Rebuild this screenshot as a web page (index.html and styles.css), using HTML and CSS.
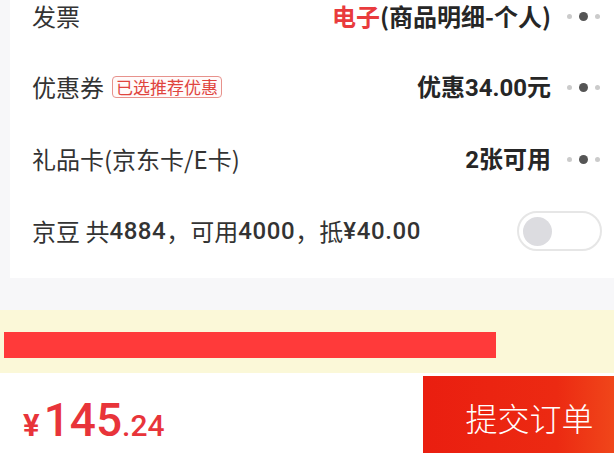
FILE: index.html
```html
<!DOCTYPE html>
<html lang="zh-CN">
<head>
<meta charset="utf-8">
<title>订单结算</title>
<link rel="stylesheet" href="styles.css">
</head>
<body>
<div class="page">
  <div class="card">
    <div class="row row-first">
      <div class="label">发票</div>
      <div class="value"><span class="red">电子</span>(商品明细-个人)</div>
      <span class="more"><i class="d s"></i><i class="d b"></i><i class="d s"></i></span>
    </div>
    <div class="row">
      <div class="label">优惠券 <span class="badge">已选推荐优惠</span></div>
      <div class="value">优惠<span class="num">34.00</span>元</div>
      <span class="more"><i class="d s"></i><i class="d b"></i><i class="d s"></i></span>
    </div>
    <div class="row">
      <div class="label">礼品卡(京东卡/E卡)</div>
      <div class="value"><span class="num">2</span>张可用</div>
      <span class="more"><i class="d s"></i><i class="d b"></i><i class="d s"></i></span>
    </div>
    <div class="row">
      <div class="label">京豆&nbsp;共<span class="num">4884</span>，可用<span class="num">4000</span>，抵<span class="num">¥40.00</span></div>
      <span class="toggle"><span class="knob"></span></span>
    </div>
  </div>
  <div class="notice">
    <div class="notice-bar"></div>
  </div>
  <div class="footer">
    <div class="price"><span class="cur">¥</span><span class="int">145</span><span class="dec">.24</span></div>
    <button class="submit">提交订单</button>
  </div>
</div>
</body>
</html>
```
FILE: styles.css
```css
* { box-sizing: border-box; }
html, body {
  margin: 0;
  padding: 0;
}
body {
  width: 614px;
  height: 453px;
  overflow: hidden;
  background: #f7f7f9;
  font-family: "Noto Sans CJK SC", "Noto Sans", sans-serif;
  color: #333;
}
.page {
  display: flex;
  flex-direction: column;
  height: 453px;
}
.card {
  margin-left: 10px;
  background: #fff;
  padding: 0 12px 11px 22px;
}
.row {
  display: flex;
  align-items: center;
  height: 72px;
}
.row-first {
  height: 51px;
  align-items: flex-start;
  padding-top: 2px;
}
.row-first .more { margin-top: 10px; }
.label {
  flex: 1;
  font-size: 24px;
  line-height: 28px;
  color: #333;
  display: flex;
  align-items: center;
  white-space: nowrap;
}
.num {
  font-family: Roboto, "Noto Sans", sans-serif;
  font-weight: 500;
}
.label .num { letter-spacing: 0.6px; }
.badge {
  margin-left: 8px;
  font-size: 17px;
  line-height: 20px;
  padding: 0 3px;
  color: #e0443e;
  border: 1px solid #e7928c;
  border-radius: 4px;
  background: #fffafa;
}
.value {
  font-size: 24px;
  line-height: 28px;
  font-weight: 700;
  color: #262626;
  white-space: nowrap;
}
.value .num { font-weight: 700; }
.red { color: #e93b3d; }
.more {
  display: flex;
  align-items: center;
  justify-content: space-between;
  width: 33px;
  margin-left: 16px;
  margin-right: 2px;
}
.d {
  display: block;
  border-radius: 50%;
}
.d.s { width: 5px; height: 5px; background: #cbcbcb; }
.d.b { width: 9px; height: 9px; background: #555; }
.toggle {
  display: flex;
  align-items: center;
  width: 85px;
  height: 40px;
  border: 2px solid #e6e6e6;
  border-radius: 20px;
  padding-left: 4px;
  background: #fff;
}
.knob {
  width: 29px;
  height: 29px;
  border-radius: 50%;
  background: #dcdce0;
}
.notice {
  margin-top: 32px;
  height: 63px;
  background: #fbf8d8;
  padding-top: 22px;
}
.notice-bar {
  margin-left: 4px;
  width: 492px;
  height: 26px;
  background: #ff3a3a;
}
.footer {
  flex: 1;
  display: flex;
  background: #fff;
}
.price {
  flex: 1;
  display: flex;
  align-items: baseline;
  padding: 24px 0 0 23px;
  color: #e8343a;
  font-family: Roboto, "Noto Sans", sans-serif;
  font-weight: 500;
  line-height: 1;
}
.cur { font-size: 31px; font-weight: 700; margin-right: 4px; }
.int { font-size: 46px; }
.dec { font-size: 30px; }
.submit {
  width: 191px;
  margin-top: 3px;
  border: 0;
  padding: 4px 0 0 22px;
  background: linear-gradient(90deg, #ea1e10, #ec2a12 70%, #f0461a);
  color: #fff;
  font-family: "Noto Sans CJK SC", sans-serif;
  font-size: 32px;
  font-weight: 300;
}
```
